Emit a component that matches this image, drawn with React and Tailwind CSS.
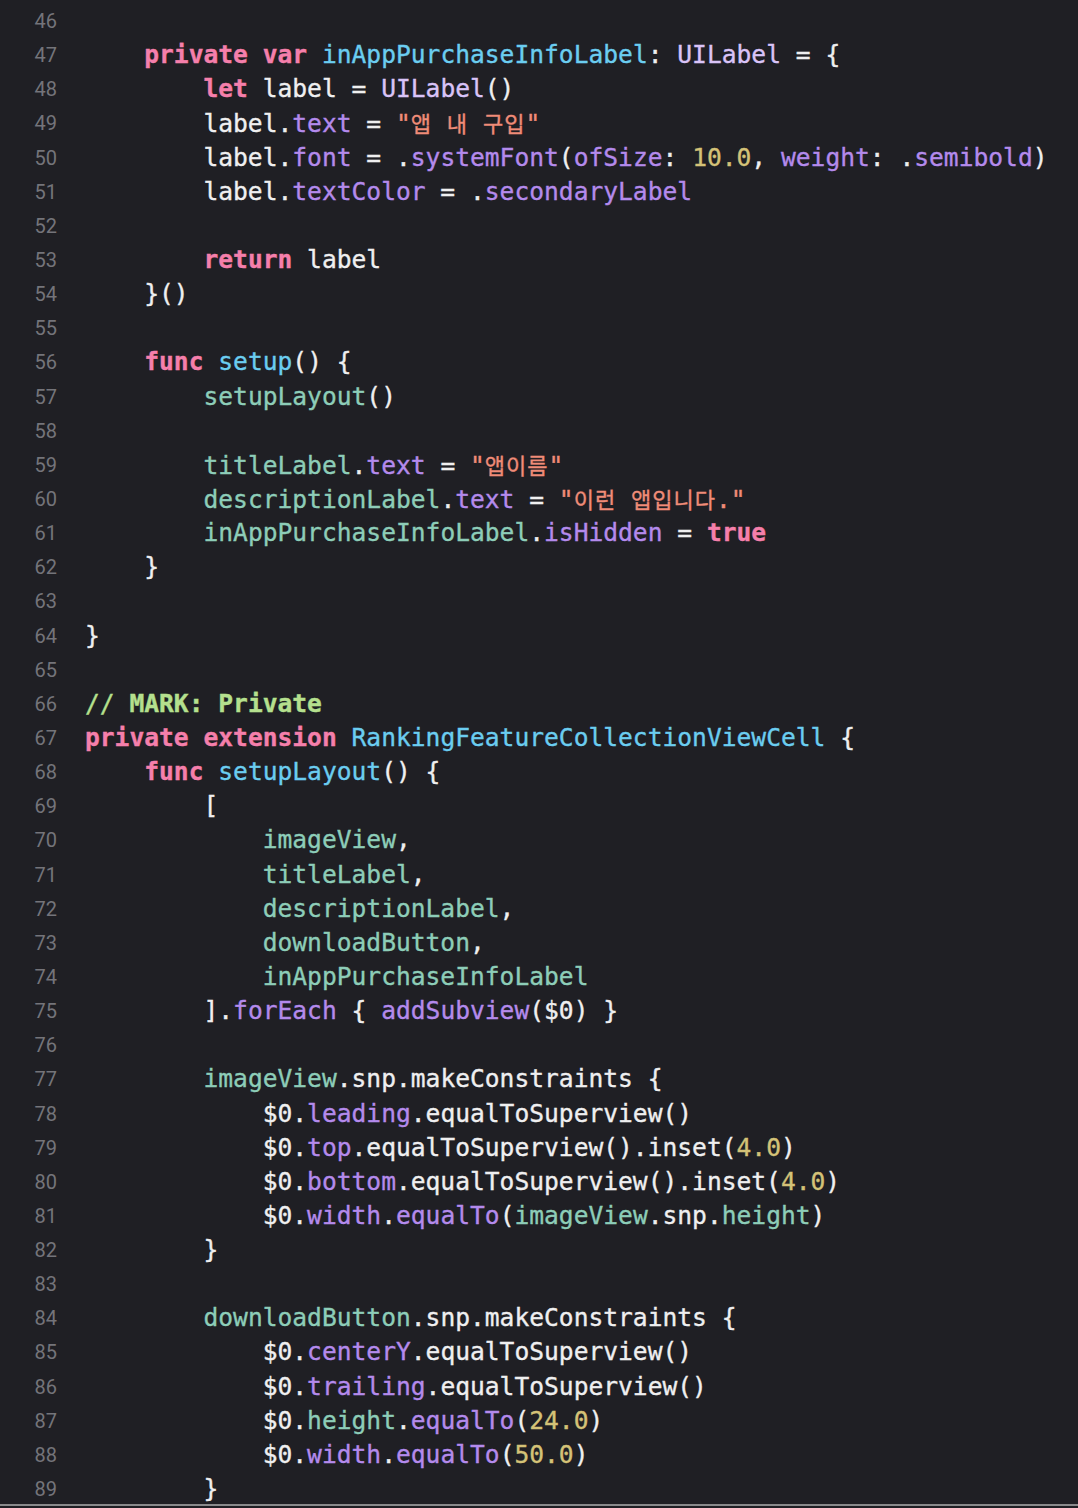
import React from "react";

const C = {
  p: "text-[#efeff0]",
  k: "text-[#f57fab] font-bold",
  d: "text-[#6bcdf0]",
  u: "text-[#b48aec]",
  t: "text-[#d9c3f7]",
  s: "text-[#f08c78]",
  n: "text-[#d4c277]",
  j: "text-[#8dcdb8]",
  m: "text-[#b5e08e]",
  mb: "text-[#b5e08e] font-bold",
};

const Ko = ({ children }) => (
  <span className="text-[22px] tracking-[1px] [font-family:'Noto_Sans_CJK_KR',sans-serif]">
    {children}
  </span>
);

const S4 = "    ";
const S8 = "        ";
const S12 = "            ";

const lines = [
  [46, []],
  [47, [["p", S4], ["k", "private"], ["p", " "], ["k", "var"], ["p", " "], ["d", "inAppPurchaseInfoLabel"], ["p", ": "], ["t", "UILabel"], ["p", " = {"]]],
  [48, [["p", S8], ["k", "let"], ["p", " label = "], ["t", "UILabel"], ["p", "()"]]],
  [49, [["p", S8 + "label."], ["u", "text"], ["p", " = "], ["s", "\""], ["sk", "앱"], ["s", " "], ["sk", "내"], ["s", " "], ["sk", "구입"], ["s", "\""]]],
  [50, [["p", S8 + "label."], ["u", "font"], ["p", " = ."], ["u", "systemFont"], ["p", "("], ["u", "ofSize"], ["p", ": "], ["n", "10.0"], ["p", ", "], ["u", "weight"], ["p", ": ."], ["u", "semibold"], ["p", ")"]]],
  [51, [["p", S8 + "label."], ["u", "textColor"], ["p", " = ."], ["u", "secondaryLabel"]]],
  [52, []],
  [53, [["p", S8], ["k", "return"], ["p", " label"]]],
  [54, [["p", S4 + "}()"]]],
  [55, []],
  [56, [["p", S4], ["k", "func"], ["p", " "], ["d", "setup"], ["p", "() {"]]],
  [57, [["p", S8], ["j", "setupLayout"], ["p", "()"]]],
  [58, []],
  [59, [["p", S8], ["j", "titleLabel"], ["p", "."], ["u", "text"], ["p", " = "], ["s", "\""], ["sk", "앱이름"], ["s", "\""]]],
  [60, [["p", S8], ["j", "descriptionLabel"], ["p", "."], ["u", "text"], ["p", " = "], ["s", "\""], ["sk", "이런"], ["s", " "], ["sk", "앱입니다"], ["s", ".\""]]],
  [61, [["p", S8], ["j", "inAppPurchaseInfoLabel"], ["p", "."], ["u", "isHidden"], ["p", " = "], ["k", "true"]]],
  [62, [["p", S4 + "}"]]],
  [63, []],
  [64, [["p", "}"]]],
  [65, []],
  [66, [["m", "// "], ["mb", "MARK: Private"]]],
  [67, [["k", "private"], ["p", " "], ["k", "extension"], ["p", " "], ["d", "RankingFeatureCollectionViewCell"], ["p", " {"]]],
  [68, [["p", S4], ["k", "func"], ["p", " "], ["d", "setupLayout"], ["p", "() {"]]],
  [69, [["p", S8 + "["]]],
  [70, [["p", S12], ["j", "imageView"], ["p", ","]]],
  [71, [["p", S12], ["j", "titleLabel"], ["p", ","]]],
  [72, [["p", S12], ["j", "descriptionLabel"], ["p", ","]]],
  [73, [["p", S12], ["j", "downloadButton"], ["p", ","]]],
  [74, [["p", S12], ["j", "inAppPurchaseInfoLabel"]]],
  [75, [["p", S8 + "]."], ["u", "forEach"], ["p", " { "], ["u", "addSubview"], ["p", "($0) }"]]],
  [76, []],
  [77, [["p", S8], ["j", "imageView"], ["p", ".snp.makeConstraints {"]]],
  [78, [["p", S12 + "$0."], ["u", "leading"], ["p", ".equalToSuperview()"]]],
  [79, [["p", S12 + "$0."], ["u", "top"], ["p", ".equalToSuperview().inset("], ["n", "4.0"], ["p", ")"]]],
  [80, [["p", S12 + "$0."], ["u", "bottom"], ["p", ".equalToSuperview().inset("], ["n", "4.0"], ["p", ")"]]],
  [81, [["p", S12 + "$0."], ["u", "width"], ["p", "."], ["u", "equalTo"], ["p", "("], ["j", "imageView"], ["p", ".snp."], ["j", "height"], ["p", ")"]]],
  [82, [["p", S8 + "}"]]],
  [83, []],
  [84, [["p", S8], ["j", "downloadButton"], ["p", ".snp.makeConstraints {"]]],
  [85, [["p", S12 + "$0."], ["u", "centerY"], ["p", ".equalToSuperview()"]]],
  [86, [["p", S12 + "$0."], ["u", "trailing"], ["p", ".equalToSuperview()"]]],
  [87, [["p", S12 + "$0."], ["j", "height"], ["p", "."], ["u", "equalTo"], ["p", "("], ["n", "24.0"], ["p", ")"]]],
  [88, [["p", S12 + "$0."], ["u", "width"], ["p", "."], ["u", "equalTo"], ["p", "("], ["n", "50.0"], ["p", ")"]]],
  [89, [["p", S8 + "}"]]],
];

function Token({ kind, text }) {
  if (kind === "sk") {
    return (
      <span className={C.s}>
        <Ko>{text}</Ko>
      </span>
    );
  }
  return <span className={C[kind]}>{text}</span>;
}

export default function App() {
  return (
    <div className="w-[1078px] h-[1508px] bg-[#1f1f24] flex flex-col overflow-hidden">
      <div className="h-[1504px] overflow-hidden pt-[4px]">
        {lines.map(([num, toks]) => (
          <div key={num} className="flex h-[34.15px] leading-[34.15px] items-center">
            <div className="w-[58px] shrink-0 text-right pr-[1px] text-[20px] text-[#74747a] [font-family:Roboto,'Liberation_Sans',sans-serif]">
              {num}
            </div>
            <div className="ml-[27px] whitespace-pre text-[24.6px] [-webkit-text-stroke:0.35px_currentColor] [font-family:'DejaVu_Sans_Mono','Noto_Sans_CJK_KR',monospace] text-[#efeff0]">
              {toks.map(([k, t], i) => (
                <Token key={i} kind={k} text={t} />
              ))}
            </div>
          </div>
        ))}
      </div>
      <div className="h-[2px] bg-[#8a8a8c]" />
      <div className="flex-1 bg-[#1f1f24]" />
    </div>
  );
}
